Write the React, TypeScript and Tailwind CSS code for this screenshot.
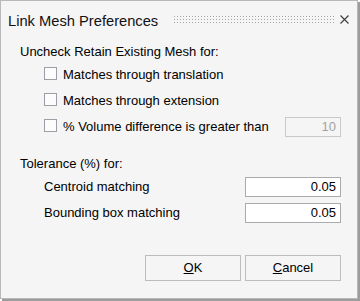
import React from "react";

function Grip() {
  return (
    <svg width="160" height="9" className="ml-auto mt-[5px] shrink-0" aria-hidden>
      <defs>
        <pattern id="g" width="3" height="3" patternUnits="userSpaceOnUse">
          <rect x="0" y="0" width="1" height="1" fill="#a6a6a6" />
        </pattern>
      </defs>
      <rect x="0" y="0" width="160" height="9" fill="url(#g)" />
    </svg>
  );
}

function CloseX() {
  return (
    <svg width="9" height="9" viewBox="0 0 9 9" className="ml-[6px] mt-[4px] mr-[8px] shrink-0" aria-hidden>
      <path d="M0.5 0.5 L8.5 8.5 M8.5 0.5 L0.5 8.5" stroke="#3c3c3c" strokeWidth="1.1" fill="none" />
    </svg>
  );
}

function Box() {
  return <div className="w-[13px] h-[13px] border border-[#9d9da6] bg-[#fcfcfc] mt-[3px] shrink-0" />;
}

function CheckRow({ label, children }: { label: string; children?: React.ReactNode }) {
  return (
    <div className="flex items-start h-[26px] pl-[43px]">
      <Box />
      <span className="ml-[6px] mt-[3px] leading-[16px]">{label}</span>
      {children}
    </div>
  );
}

export default function App() {
  return (
    <div className="w-[360px] h-[301px] bg-white" style={{ fontFamily: '"Liberation Sans", Arial, sans-serif' }}>
      <div className="w-[358px] h-[299px] border border-[#b9b9b9] bg-[#f5f5f5] shadow-[2px_2px_0_#9c9c9c] text-[13px] text-black flex flex-col">
        <div className="flex items-start h-[20px] mt-[10px] pl-[7px]">
          <span className="text-[14.7px] leading-[20px] text-[#111]">Link Mesh Preferences</span>
          <Grip />
          <CloseX />
        </div>
        <div className="pr-[16px] flex flex-col">
          <div className="mt-[13px] pl-[19px] leading-[16px]">Uncheck Retain Existing Mesh for:</div>
          <div className="mt-[4px] flex flex-col">
            <CheckRow label="Matches through translation" />
            <CheckRow label="Matches through extension" />
            <CheckRow label="% Volume difference is greater than">
              <div className="ml-auto mt-[1px] w-[56px] h-[20px] border border-[#c9c9c9] text-right pr-[4px] leading-[18px] text-[#a3a3a3]">
                10
              </div>
            </CheckRow>
          </div>
          <div className="mt-[14px] pl-[19px] leading-[16px]">Tolerance (%) for:</div>
          <div className="mt-[5px] flex items-center h-[20px] pl-[43px]">
            <span className="leading-[16px]">Centroid matching</span>
            <div className="ml-auto w-[96px] h-[20px] border border-[#ababab] bg-white text-right pr-[4px] leading-[18px]">0.05</div>
          </div>
          <div className="mt-[6px] flex items-center h-[20px] pl-[43px]">
            <span className="leading-[16px]">Bounding box matching</span>
            <div className="ml-auto w-[96px] h-[20px] border border-[#ababab] bg-white text-right pr-[4px] leading-[18px]">0.05</div>
          </div>
          <div className="mt-[32px] flex justify-end gap-[4px]">
            <button className="w-[96px] h-[26px] border border-[#bdbdbd] bg-[#f5f5f5] flex items-center justify-center leading-[16px]">
              <span><u>O</u>K</span>
            </button>
            <button className="w-[96px] h-[26px] border border-[#bdbdbd] bg-[#f5f5f5] flex items-center justify-center leading-[16px]">
              <span><u>C</u>ancel</span>
            </button>
          </div>
        </div>
      </div>
    </div>
  );
}
